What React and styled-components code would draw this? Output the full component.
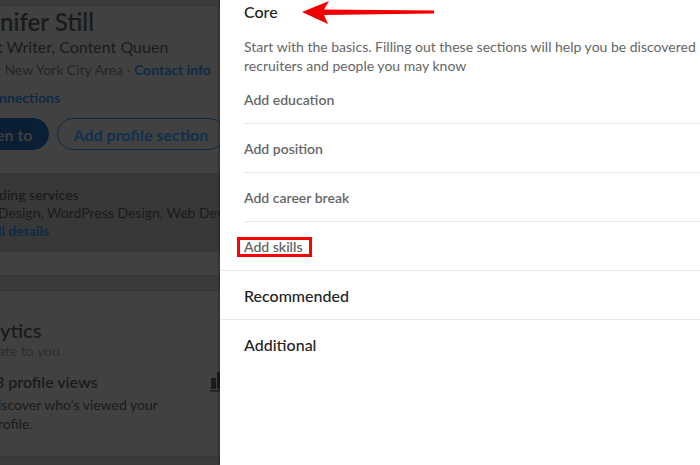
import React from "react";
import styled, { createGlobalStyle } from "styled-components";

const GlobalStyle = createGlobalStyle`
  html, body {
    margin: 0;
    padding: 0;
    background: #3b3b3b;
  }
  body {
    font-family: Lato, "Liberation Sans", sans-serif;
    -webkit-font-smoothing: antialiased;
  }
`;

const Screen = styled.div`
  display: flex;
  width: 700px;
  height: 465px;
  overflow: hidden;
`;

/* dimmed profile page behind the modal */
const Backdrop = styled.div`
  flex: none;
  width: 220px;
  overflow: hidden;
  background: #3b3b3b;
`;

const Column = styled.div`
  width: 240px;
`;

const ProfileCard = styled.div`
  background: #414141;
  padding-bottom: 23px;
  border-bottom: 1px solid #363636;
`;

const Line = styled.div`
  margin-left: ${(p) => p.$cut || 0}px;
  margin-top: ${(p) => p.$top || 0}px;
  font-size: ${(p) => p.$size || 14}px;
  line-height: ${(p) => p.$lh || 20}px;
  font-weight: ${(p) => (p.$bold ? 600 : 400)};
  color: ${(p) => p.$color || "#1b1b1b"};
  white-space: nowrap;
`;

const Link = styled.span`
  color: #0e2a46;
  font-weight: 700;
`;

const Buttons = styled.div`
  display: flex;
  align-items: center;
  gap: 8px;
  margin-top: 10px;
`;

const Pill = styled.div`
  display: flex;
  align-items: center;
  height: 32px;
  box-sizing: border-box;
  border-radius: 16px;
  font-size: 16px;
  font-weight: 700;
  white-space: nowrap;
  padding: 0 ${(p) => p.$right || 16}px 0 ${(p) => p.$left || 16}px;
  margin-left: ${(p) => p.$cut || 0}px;
  border: 1px solid ${(p) => (p.$filled ? "#0a1f36" : "#0e2a46")};
  background: ${(p) => (p.$filled ? "#0a1f36" : "transparent")};
  color: ${(p) => (p.$filled ? "#3e3e3e" : "#11304f")};
`;

const ServiceBox = styled.div`
  margin-top: 23px;
  background: #383838;
  padding: 13px 0 12px;
`;

const AnalyticsCard = styled.div`
  margin-top: 14px;
  background: #414141;
  border-top: 1px solid #363636;
  border-bottom: 1px solid #363636;
  padding: 27px 0 23px;
`;

const ViewsRow = styled.div`
  display: flex;
  justify-content: space-between;
  align-items: flex-start;
  margin-top: 11px;
  padding-right: 6px;
`;

const BarIcon = () => (
  <svg width="24" height="20" viewBox="0 0 24 20" style={{ marginTop: 1 }}>
    <rect x="1" y="6" width="5" height="11" fill="#1b1b1b" />
    <rect x="7" y="0" width="5" height="17" fill="#1b1b1b" />
    <rect x="13" y="4" width="5" height="13" fill="#1b1b1b" />
    <rect x="0" y="18" width="20" height="1.5" fill="#1b1b1b" />
  </svg>
);

/* modal panel */
const Panel = styled.div`
  flex: none;
  width: 520px;
  background: #fff;
  box-shadow: -1px 0 2px rgba(0, 0, 0, 0.35);
  color: rgba(0, 0, 0, 0.9);
`;

const Scroller = styled.div`
  margin-top: -13px;
`;

const Section = styled.div`
  padding-left: 24px;
  border-bottom: 1px solid #e6e6e6;

  &:last-child {
    border-bottom: none;
  }
`;

const Heading = styled.div`
  position: relative;
  padding: 13px 0 11px;
  font-size: 16px;
  line-height: 24px;
  font-weight: 500;
  color: #1f1f1f;
`;

const Arrow = styled.svg`
  position: absolute;
  left: 58px;
  top: 13px;
`;

const Intro = styled.p`
  margin: 0;
  padding-top: 2px;
  width: 470px;
  font-size: 14px;
  line-height: 19px;
  color: #666;
`;

const Item = styled.div`
  padding: 13px 0 11px;
  font-size: 14px;
  line-height: 24px;
  font-weight: 600;
  color: #666;
  border-bottom: 1px solid #e6e6e6;

  &:last-child {
    border-bottom: none;
  }
`;

const Marked = styled.span`
  position: relative;

  &::after {
    content: "";
    position: absolute;
    left: -7px;
    right: -9px;
    top: -1px;
    bottom: -2px;
    border: 3px solid #ff0000;
  }
`;

const items = ["Add education", "Add position", "Add career break"];

export default function App() {
  return (
    <>
      <GlobalStyle />
      <Screen>
        <Backdrop>
          <Column>
            <ProfileCard>
              <Line $size={24} $lh={30} $top={7} $bold>
                nifer Still
              </Line>
              <Line $size={16} $lh={20} $cut={-3}>
                t Writer, Content Quuen
              </Line>
              <Line $top={3} $color="#262626" $cut={-4}>
                r New York City Area · <Link>Contact info</Link>
              </Line>
              <Line $top={8} $cut={-1}>
                <Link>nnections</Link>
              </Line>
              <Buttons>
                <Pill $filled $cut={-25} $left={20} $right={15}>
                  en to
                </Pill>
                <Pill>Add profile section</Pill>
              </Buttons>
              <ServiceBox>
                <Line $lh={18} $bold $cut={-1}>
                  ding services
                </Line>
                <Line $lh={18} $cut={-2}>
                  Design, WordPress Design, Web Development
                </Line>
                <Line $lh={18} $cut={-2}>
                  <Link>ll details</Link>
                </Line>
              </ServiceBox>
            </ProfileCard>
            <AnalyticsCard>
              <Line $size={20} $lh={24} $bold>
                ytics
              </Line>
              <Line $lh={18} $color="#2e2e2e" $cut={-2}>
                ate to you
              </Line>
              <ViewsRow>
                <Line $size={16} $lh={22} $bold $cut={-5}>
                  3 profile views
                </Line>
                <BarIcon />
              </ViewsRow>
              <Line $lh={19} $top={2} $cut={-2}>
                iscover who's viewed your
              </Line>
              <Line $lh={19} $cut={-2}>
                rofile.
              </Line>
            </AnalyticsCard>
          </Column>
        </Backdrop>

        <Panel>
          <Scroller>
            <Section>
              <Heading>
                Core
                <Arrow width="132" height="24" viewBox="0 0 132 24">
                  <path
                    d="M0 12 L27 1 L22 9.5 L132 10.5 L132 13.5 L22 15 L26 24 Z"
                    fill="#f20000"
                  />
                </Arrow>
              </Heading>
              <Intro>
                Start with the basics. Filling out these sections will help you be discovered by
                recruiters and people you may know
              </Intro>
              <div>
                {items.map((label) => (
                  <Item key={label}>{label}</Item>
                ))}
                <Item>
                  <Marked>Add skills</Marked>
                </Item>
              </div>
            </Section>
            <Section>
              <Heading>Recommended</Heading>
            </Section>
            <Section>
              <Heading>Additional</Heading>
            </Section>
          </Scroller>
        </Panel>
      </Screen>
    </>
  );
}
